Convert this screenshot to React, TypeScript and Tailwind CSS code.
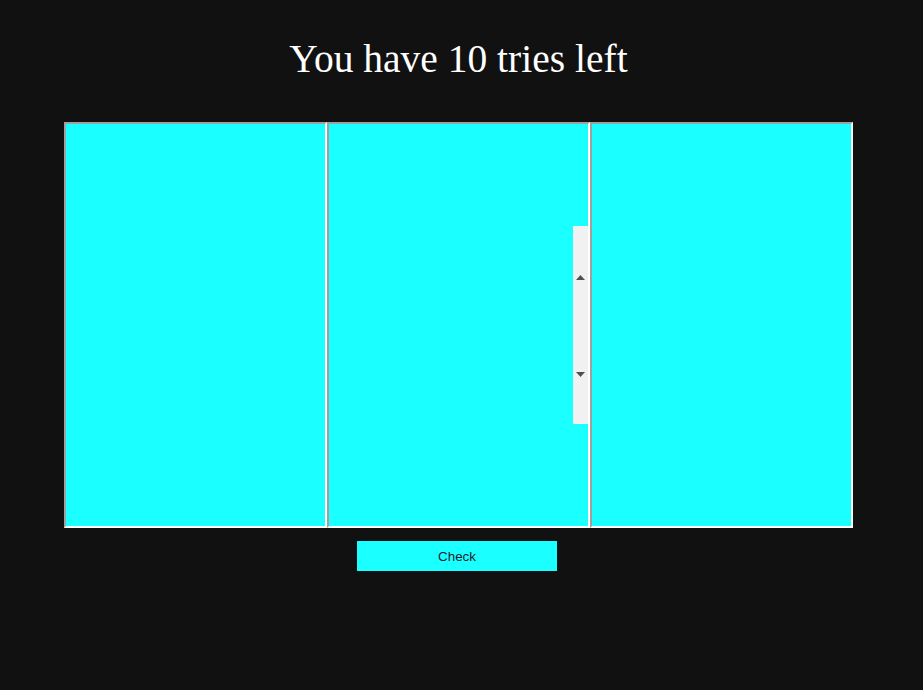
import React from "react";

function Box({ scroll }: { scroll?: boolean }) {
  return (
    <div className="relative h-[406px] w-[263px] border-2 border-t-[#a0a0a0] border-l-[#a0a0a0] border-b-white border-r-white bg-[#1affff]">
      {scroll && (
        <div className="absolute right-0 top-[102px] flex h-[198px] w-[15px] flex-col items-center bg-[#f1f1f1]">
          <svg className="mt-[49px]" width="9" height="5" viewBox="0 0 9 5">
            <polygon points="4.5,0 9,5 0,5" fill="#505050" />
          </svg>
          <svg className="mt-[92px]" width="9" height="5" viewBox="0 0 9 5">
            <polygon points="0,0 9,0 4.5,5" fill="#505050" />
          </svg>
        </div>
      )}
    </div>
  );
}

export default function App() {
  return (
    <div className="min-h-[690px] w-full bg-[#111111]">
      <div className="flex flex-col pt-[37px]">
        <h1
          className="ml-[64px] w-[789px] text-center text-[39.5px] leading-[44px] text-white"
          style={{ fontFamily: '"Liberation Serif", "Times New Roman", serif' }}
        >
          You have 10 tries left
        </h1>
        <div className="ml-[64px] mt-[41px] flex w-[789px]">
          <Box />
          <Box scroll />
          <Box />
        </div>
        <button
          className="ml-[357px] mt-[13px] h-[30px] w-[200px] bg-[#1affff] pt-[1px] text-[13.33px] text-[#1a1a2e]"
          style={{ fontFamily: '"Liberation Sans", Arial, sans-serif' }}
        >
          Check
        </button>
      </div>
    </div>
  );
}
